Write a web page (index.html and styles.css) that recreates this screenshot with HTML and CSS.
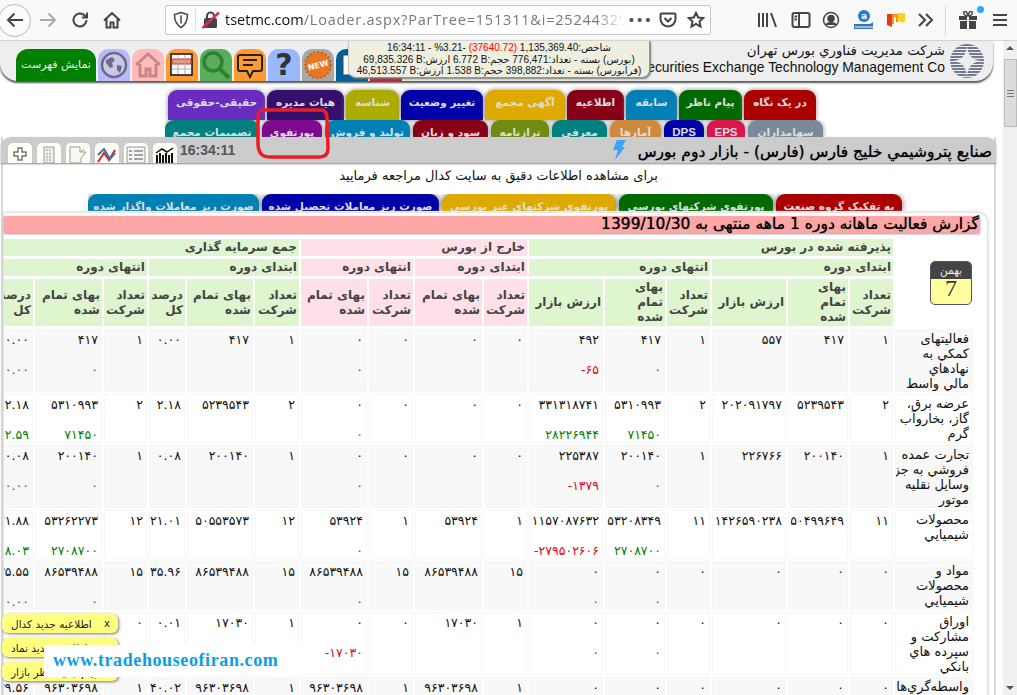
FILE: index.html
```html
<!DOCTYPE html>
<html lang="fa">
<head>
<meta charset="utf-8">
<title>tsetmc</title>
<link rel="stylesheet" href="styles.css">
</head>
<body>
<header class="toolbar">
  <div class="navbtns">
    <span class="backcircle"><svg width="20" height="20" viewBox="0 0 20 20" class="ic"><path d="M18 10H3M9.500 3.500 3 10l6.500 6.500"/></svg></span>
    <svg width="20" height="20" viewBox="0 0 20 20" class="ic faint"><path d="M2 10h15M10.500 3.500 17 10l-6.500 6.500"/></svg>
    <svg width="20" height="20" viewBox="0 0 20 20" class="ic"><path d="M16.500 10a6.500 6.500 0 1 1-2-4.700L17 7.500M17 2.500v5h-5" /></svg>
    <svg width="20" height="20" viewBox="0 0 20 20" class="ic"><path d="M2 10.500 10 3l8 7.500M4.500 9v8.500h4v-5h3v5h4V9"/></svg>
  </div>
  <div class="urlbar">
    <svg width="16" height="18" viewBox="0 0 16 18" class="ic thin"><path d="M8 1.500 14.500 3.500c0 6-1.500 10-6.500 13-5-3-6.500-7-6.500-13z"/><path d="M8 4.500v8" /></svg>
    <span class="urlsep"></span>
    <svg width="20" height="18" viewBox="0 0 20 18" class="lock"><rect x="3" y="7" width="13" height="10" rx="1.500" fill="#444"/><path d="M6 7V5a3.500 3.500 0 0 1 7 0v2" fill="none" stroke="#444" stroke-width="2"/><path d="M1.500 17 18 1.500" stroke="#e22850" stroke-width="2.500"/></svg>
    <span class="url"><b>tsetmc.com</b>/Loader.aspx?ParTree=151311&amp;i=25244329144808274</span>
    <span class="urlact">
      <span class="dots">•••</span>
      <svg width="18" height="18" viewBox="0 0 18 18" class="ic"><path d="M2.500 2.500h13a1 1 0 0 1 1 1V8a7.500 7.500 0 0 1-15 0V3.500a1 1 0 0 1 1-1zM5.500 7 9 10.500 12.500 7"/></svg>
      <svg width="18" height="18" viewBox="0 0 18 18" class="ic"><path d="m9 1.800 2.200 4.700 5 .6-3.700 3.400 1 5L9 13l-4.500 2.500 1-5L1.800 7.100l5-.6z"/></svg>
    </span>
  </div>
  <div class="tools">
    <svg width="22" height="18" viewBox="0 0 22 18" class="ic"><path d="M2 2v14M6 2v14M10 2v14M14 2l5 14"/></svg>
    <svg width="20" height="18" viewBox="0 0 20 18" class="ic"><rect x="1.500" y="2" width="17" height="14" rx="2"/><path d="M8 2v14M3.500 5.500H6M3.500 8.500H6"/></svg>
    <svg width="18" height="18" viewBox="0 0 18 18" class="ic thin"><circle cx="9" cy="9" r="7.500"/><circle cx="9" cy="7.500" r="3" fill="#444"/><path d="M4 14c1-3 9-3 10 0" fill="#444"/></svg>
    <svg width="24" height="22" viewBox="0 0 24 22"><circle cx="12" cy="7" r="6" fill="#1f7fd1"/><text x="12" y="10" class="atxt">a</text><path d="M4 15h14l3-2v7H2v-5z" fill="#3a78b5"/><path d="M3 18h18" stroke="#fff"/></svg>
    <svg width="18" height="18" viewBox="0 0 18 18"><path d="M0 3h5v13l-5-2z" fill="#e8381c"/><path d="M5 3h6v8H9V6H7v7H5z" fill="#f7941d"/><path d="M11 2h7v8l-3 2-2-2-2 1z" fill="#fbd21c"/></svg>
    <svg width="18" height="16" viewBox="0 0 18 16" class="ic"><path d="m2 2 6 6-6 6M9 2l6 6-6 6"/></svg>
  </div>
  <span class="toolsep"></span>
  <div class="tools2">
    <span class="gift"><svg width="20" height="18" viewBox="0 0 20 18"><path d="M1 5h8v4H1zM11 5h8v4h-8zM2 10h7v8H2zM11 10h7v8h-7z" fill="#444"/><path d="M10 5C7 5 5 3 6 1s4 1 4 4c0-3 3-6 4-4s-1 4-4 4" fill="none" stroke="#444" stroke-width="1.500"/></svg><i class="giftdot"></i></span>
    <svg width="16" height="14" viewBox="0 0 16 14" class="ic"><path d="M1 2h14M1 7h14M1 12h14"/></svg>
  </div>
</header>

<div class="viewport">
  <main class="page">
    <section class="logobar">
      <nav class="appnav">
        <a class="menubtn">نمایش فهرست</a>
        <a class="navic c-lilac"><svg width="28" height="28" viewBox="0 0 28 28"><circle cx="14" cy="14" r="12" fill="#c9c9e6" stroke="#6a6a8c" stroke-width="2.500"/><path d="M6 9l6-3 3 3-3 3 1 4-3 1-4-5zM17 14l5 1-2 7-3-3z" fill="#6a6a8c"/></svg></a>
        <a class="navic c-pink"><svg width="28" height="28" viewBox="0 0 28 28"><path d="M2 14 14 3l12 11" fill="none" stroke="#c98585" stroke-width="3"/><path d="M6 13v12h6v-7h4v7h6V13" fill="none" stroke="#c98585" stroke-width="3"/></svg></a>
        <a class="navic c-orange"><svg width="26" height="26" viewBox="0 0 26 26"><rect x="2" y="2" width="21" height="21" fill="#fff" stroke="#111" stroke-width="1.500"/><rect x="3" y="7" width="19" height="5" fill="#e89a7a" stroke="#c33"/><path d="M3 17h19M9 3v19M16 3v19" stroke="#aaa"/></svg></a>
        <a class="navic c-green"><svg width="30" height="30" viewBox="0 0 30 30"><circle cx="12" cy="12" r="9" fill="none" stroke="#2f7f35" stroke-width="3.500"/><path d="m18 18 10 10" stroke="#2f7f35" stroke-width="4"/></svg></a>
        <a class="navic c-orange"><svg width="28" height="28" viewBox="0 0 28 28"><path d="M4 4h20a2 2 0 0 1 2 2v12a2 2 0 0 1-2 2h-7l-3 6-3-6H4a2 2 0 0 1-2-2V6a2 2 0 0 1 2-2z" fill="none" stroke="#222" stroke-width="2"/><path d="M7 9h14M7 14h10" stroke="#222" stroke-width="2"/></svg></a>
        <a class="navic c-blue"><span class="qmark">?</span></a>
        <a class="navic c-gray"><svg width="30" height="30" viewBox="0 0 30 30"><circle cx="15" cy="15" r="13" fill="#e87722" stroke="#c95f12" stroke-dasharray="2 2" stroke-width="2"/><text x="15" y="18" class="newtxt" transform="rotate(-15 15 15)">NEW</text></svg></a>
        <a class="navic c-navy"><svg width="24" height="24" viewBox="0 0 24 24"><path d="M3 2h10v20H3z" fill="#fff" stroke="#444"/></svg></a>
        <a class="navic c-red"></a>
      </nav>
      <div class="brand">
        <div class="brandtext">
          <div class="brandfa">شرکت مديريت فناوري بورس تهران</div>
          <div class="branden">Securities Exchange Technology Management Co</div>
        </div>
        <svg class="emblem" width="34" height="36" viewBox="0 0 34 36">
          <defs><clipPath id="disc"><circle cx="17" cy="18" r="17"/></clipPath></defs>
          <g clip-path="url(#disc)" stroke="#747a92" stroke-width="1.800">
            <path d="M0 2h34M0 5h34M0 8h34M0 11h34M0 14h34M0 17h34M0 20h34M0 23h34M0 26h34M0 29h34M0 32h34M0 35h34"/>
          </g>
          <path d="M17 3c1 9 5 14 14 15-9 1-13 6-14 15-1-9-5-14-14-15 9-1 13-6 14-15z" fill="#eee"/>
        </svg>
      </div>
    </section>

    <div class="tabs tabs-a">
      <a class="tab t-violet">حقیقی-حقوقی</a>
      <a class="tab t-indigo">هیات مدیره</a>
      <a class="tab t-olive">شناسه</a>
      <a class="tab t-navy">تغییر وضعیت</a>
      <a class="tab t-amber">آگهی مجمع</a>
      <a class="tab t-maroon">اطلاعیه</a>
      <a class="tab t-sky">سابقه</a>
      <a class="tab t-green">پیام ناظر</a>
      <a class="tab t-red">در یک نگاه</a>
    </div>
    <div class="tabs tabs-b">
      <a class="tab t-teal">تصمیمات مجمع</a>
      <a class="tab t-purple">پورتفوی</a>
      <a class="tab t-sky">تولید و فروش</a>
      <a class="tab t-maroon">سود و زیان</a>
      <a class="tab t-moss">ترازنامه</a>
      <a class="tab t-teal">معرفی</a>
      <a class="tab t-tan">آمارها</a>
      <a class="tab t-navy latin">DPS</a>
      <a class="tab t-crimson latin">EPS</a>
      <a class="tab t-slate">سهامداران</a>
    </div>

    <section class="panel">
      <div class="panelhead">
        <div class="tinytools">
          <a class="tiny"><svg width="16" height="16" viewBox="0 0 16 16"><path d="M6 2h4v4h4v4h-4v4H6v-4H2V6h4z" fill="#fff" stroke="#777" stroke-width="1.500"/></svg></a>
          <a class="tiny"><svg width="12" height="18" viewBox="0 0 12 18"><rect x="1" y="1" width="10" height="16" fill="#eee" stroke="#999"/><path d="M3 4h6M3 8h6M3 11h6M3 14h6" stroke="#999" stroke-dasharray="2 1"/></svg></a>
          <a class="tiny"><svg width="20" height="18" viewBox="0 0 20 18"><path d="M2 1h10v5h6l-5 6v5H2zM13 6l3-3" fill="#f8f8f0" stroke="#999"/></svg></a>
          <a class="tiny"><svg width="20" height="18" viewBox="0 0 20 18"><path d="m1 16 6-9 5 7 6-10" fill="none" stroke="#d22" stroke-width="2"/><path d="m1 9 6-6 6 10 5-6" fill="none" stroke="#37a" stroke-width="2"/></svg></a>
          <a class="tiny"><svg width="20" height="18" viewBox="0 0 20 18"><rect x="1" y="1" width="18" height="16" fill="#f5f5f5" stroke="#999"/><path d="M3 5h3M8 5h9M3 9h3M8 9h9M3 13h3M8 13h9" stroke="#888" stroke-width="1.500"/></svg></a>
          <a class="tiny"><svg width="20" height="18" viewBox="0 0 20 18"><path d="M2 18V9M5 18V7M8 18V9M11 18V7M14 18V9M17 18V7" stroke="#111" stroke-width="2"/><path d="m1 7 6-4 5 3 6-4" fill="none" stroke="#111" stroke-width="1.500"/></svg></a>
        </div>
        <span class="clock">16:34:11</span>
        <div class="paneltitle">
          <svg class="bolt" width="14" height="20" viewBox="0 0 14 20"><path d="M5 0h9l-4 7h3L3 20l3-10H1z" fill="#3ba2fb"/></svg>
          <h1 class="symbol">صنایع پتروشیمي خلیج فارس (فارس) - بازار دوم بورس</h1>
        </div>
      </div>
      <p class="notice">برای مشاهده اطلاعات دقیق به سایت کدال مراجعه فرمایید</p>
      <div class="tabs tabs-c">
        <a class="tab t-sky">صورت ریز معاملات واگذار شده</a>
        <a class="tab t-navy">صورت ریز معاملات تحصیل شده</a>
        <a class="tab t-amber">پورتفوی شرکتهای غیر بورسی</a>
        <a class="tab t-green">پورتفوی شرکتهای بورسی</a>
        <a class="tab t-red">به تفکیک گروه صنعت</a>
      </div>
      <div class="card">
        <h2 class="reporttitle">گزارش فعالیت ماهانه دوره 1 ماهه منتهی به 1399/10/30</h2>
        <div class="tablewrap">
        <table class="report">
          <colgroup><col class="w78"><col class="w43"><col class="w60"><col class="w74"><col class="w43"><col class="w60"><col class="w74"><col class="w43"><col class="w67"><col class="w44"><col class="w66"><col class="w44"><col class="w66"><col class="w36"><col class="w43"><col class="w67"><col class="w43"></colgroup>
          <thead>
            <tr class="h1">
              <th rowspan="3" class="calcell"><div class="cal"><div class="calm">بهمن</div><div class="cald">7</div></div></th>
              <th colspan="6" class="gr">پذیرفته شده در بورس</th>
              <th colspan="4" class="pk">خارج از بورس</th>
              <th colspan="6" class="gr">جمع سرمایه گذاری</th>
            </tr>
            <tr class="h1">
              <th colspan="3" class="gr">ابتدای دوره</th>
              <th colspan="3" class="gr">انتهای دوره</th>
              <th colspan="2" class="pk">ابتدای دوره</th>
              <th colspan="2" class="pk">انتهای دوره</th>
              <th colspan="3" class="gr">ابتدای دوره</th>
              <th colspan="3" class="gr">انتهای دوره</th>
            </tr>
            <tr class="h3">
              <th class="gr">تعداد<br>شرکت</th><th class="gr">بهای<br>تمام<br>شده</th><th class="gr mid">ارزش بازار</th>
              <th class="gr">تعداد<br>شرکت</th><th class="gr">بهای<br>تمام<br>شده</th><th class="gr mid">ارزش بازار</th>
              <th class="pk">تعداد<br>شرکت</th><th class="pk">بهای تمام<br>شده</th>
              <th class="pk">تعداد<br>شرکت</th><th class="pk">بهای تمام<br>شده</th>
              <th class="gr">تعداد<br>شرکت</th><th class="gr">بهای تمام<br>شده</th><th class="gr">درصد<br>کل</th>
              <th class="gr">تعداد<br>شرکت</th><th class="gr">بهای تمام<br>شده</th><th class="gr">درصد<br>کل</th>
            </tr>
          </thead>
          <tbody>
            <tr class="alt">
              <td class="name">فعالیتهای<br>کمکي به<br>نهادهاي<br>مالي واسط</td>
              <td>۱</td><td>۴۱۷</td><td>۵۵۷</td><td>۱</td><td>۴۱۷<i class="up">۰</i></td><td>۴۹۲<i class="dn">&lrm;-۶۵</i></td>
              <td>۰</td><td>۰</td><td>۰</td><td>۰<i class="up">۰</i></td>
              <td>۱</td><td>۴۱۷</td><td>۰.۰۰</td><td>۱</td><td>۴۱۷<i class="up">۰</i></td><td>۰.۰۰<i class="up">۰.۰۰</i></td>
            </tr>
            <tr>
              <td class="name">عرضه برق،<br>گاز، بخاروآب<br>گرم</td>
              <td>۲</td><td>۵۲۳۹۵۴۳</td><td>۲۰۲۰۹۱۷۹۷</td><td>۲</td><td>۵۳۱۰۹۹۳<i class="up">۷۱۴۵۰</i></td><td>۳۳۱۳۱۸۷۴۱<i class="up">۲۸۲۲۶۹۴۴</i></td>
              <td>۰</td><td>۰</td><td>۰</td><td>۰<i class="up">۰</i></td>
              <td>۲</td><td>۵۲۳۹۵۴۳</td><td>۲.۱۸</td><td>۲</td><td>۵۳۱۰۹۹۳<i class="up">۷۱۴۵۰</i></td><td>۲.۱۸<i class="up">۲.۵۹</i></td>
            </tr>
            <tr class="alt">
              <td class="name">تجارت عمده<br>فروشي به جز<br>وسايل نقليه<br>موتور</td>
              <td>۱</td><td>۲۰۰۱۴۰</td><td>۲۲۶۷۶۶</td><td>۱</td><td>۲۰۰۱۴۰<i class="up">۰</i></td><td>۲۲۵۳۸۷<i class="dn">&lrm;-۱۳۷۹</i></td>
              <td>۰</td><td>۰</td><td>۰</td><td>۰<i class="up">۰</i></td>
              <td>۱</td><td>۲۰۰۱۴۰</td><td>۰.۰۸</td><td>۱</td><td>۲۰۰۱۴۰<i class="up">۰</i></td><td>۰.۰۸<i class="up">۰.۰۰</i></td>
            </tr>
            <tr>
              <td class="name">محصولات<br>شیمیایي</td>
              <td>۱۱</td><td>۵۰۴۹۹۶۴۹</td><td>۱۴۲۶۵۹۰۲۳۸</td><td>۱۱</td><td>۵۳۲۰۸۳۴۹<i class="up">۲۷۰۸۷۰۰</i></td><td>۱۱۵۷۰۸۷۶۳۲<i class="dn">&lrm;-۲۷۹۵۰۲۶۰۶</i></td>
              <td>۱</td><td>۵۳۹۲۴</td><td>۱</td><td>۵۳۹۲۴<i class="up">۰</i></td>
              <td>۱۲</td><td>۵۰۵۵۳۵۷۳</td><td>۲۱.۰۱</td><td>۱۲</td><td>۵۳۲۶۲۲۷۳<i class="up">۲۷۰۸۷۰۰</i></td><td>۲۱.۸۸<i class="up">۱۸.۰۳</i></td>
            </tr>
            <tr class="alt">
              <td class="name">مواد و<br>محصولات<br>شیمیایي</td>
              <td>۰</td><td>۰</td><td>۰</td><td>۰</td><td>۰<i class="up">۰</i></td><td>۰<i class="up">۰</i></td>
              <td>۱۵</td><td>۸۶۵۳۹۴۸۸</td><td>۱۵</td><td>۸۶۵۳۹۴۸۸<i class="up">۰</i></td>
              <td>۱۵</td><td>۸۶۵۳۹۴۸۸</td><td>۳۵.۹۶</td><td>۱۵</td><td>۸۶۵۳۹۴۸۸<i class="up">۰</i></td><td>۳۵.۵۵<i class="up">۰.۰۰</i></td>
            </tr>
            <tr>
              <td class="name">اوراق<br>مشارکت و<br>سپرده هاي<br>بانکي</td>
              <td>۰</td><td>۰</td><td>۰</td><td>۰</td><td>۰<i class="up">۰</i></td><td>۰<i class="up">۰</i></td>
              <td>۱</td><td>۱۷۰۳۰</td><td>۰</td><td>۰<i class="dn">&lrm;-۱۷۰۳۰</i></td>
              <td>۱</td><td>۱۷۰۳۰</td><td>۰.۰۱</td><td>۰</td><td>۰</td><td>۰.۰۰</td>
            </tr>
            <tr class="alt">
              <td class="name">واسطه‌گري‌هاي<br>مالي و<br>پولي</td>
              <td>۰</td><td>۰</td><td>۰</td><td>۰</td><td>۰</td><td>۰</td>
              <td>۱</td><td>۹۶۳۰۳۶۹۸</td><td>۱</td><td>۹۶۳۰۳۶۹۸</td>
              <td>۱</td><td>۹۶۳۰۳۶۹۸</td><td>۴۰.۰۲</td><td>۱</td><td>۹۶۳۰۳۶۹۸</td><td>۳۹.۵۶</td>
            </tr>
          </tbody>
        </table>
        </div>
      </div>
    </section>

    <aside class="ticker">
      <div class="tickline">شاخص:1,135,369.40 <span class="neg">(37640.72)</span> <bdi dir="ltr">%3.21-</bdi> - 16:34:11</div>
      <div class="tickline">(بورس) بسته - تعداد:776,471 حجم:<bdi dir="ltr">6.772 B</bdi> ارزش:<bdi dir="ltr">69,835.326 B</bdi></div>
      <div class="tickline">(فرابورس) بسته - تعداد:398,882 حجم:<bdi dir="ltr">1.538 B</bdi> ارزش:<bdi dir="ltr">46,513.557 B</bdi></div>
    </aside>

    <svg class="marker" width="76" height="54" viewBox="0 0 76 54"><path d="M8 3h58c4 0 6 3 6 8l1 30c0 6-3 9-8 9H16C8 50 4 48 3 38V10c0-4 2-7 5-7z" fill="none" stroke="#ed1c24" stroke-width="3.500"/></svg>

    <div class="toasts">
      <div class="toast"><span>اطلاعیه جدید کدال</span><b class="x">x</b></div>
      <div class="toast"><span>اطلاعیه جدید نماد</span><b class="x">x</b></div>
      <div class="toast"><span>پیام جدید ناظر بازار</span><b class="x">x</b></div>
    </div>
    <div class="watermark">www.tradehouseofiran.com</div>
  </main>

  <div class="scrollbar">
    <span class="arrow up-a"></span>
    <span class="thumb"><i class="grip"></i></span>
    <span class="arrow dn-a"></span>
  </div>
</div>
</body>
</html>
```

FILE: styles.css
```css
* { box-sizing: border-box; }
html, body { margin: 0; height: 100%; overflow: hidden; }
body { width: 1017px; height: 695px; background: #fff; font-family: "DejaVu Sans", sans-serif; display: flex; flex-direction: column; }

.toolbar { height: 41px; flex: none; background: #f9f9fa; border-bottom: 1px solid #d4d4d4; display: flex; align-items: center; position: relative; }
.ic { fill: none; stroke: #444; stroke-width: 2; }
.ic.faint { stroke: #aaa; }
.ic.thin { stroke-width: 1.500; }
.navbtns { display: flex; align-items: center; width: 165px; flex: none; padding-left: 4px; gap: 12px; }
.backcircle { width: 33px; height: 33px; margin-left: -6px; margin-right: -5px; border: 1px solid #b8b8b8; border-radius: 50%; background: #fcfcfc; display: flex; align-items: center; justify-content: center; flex: none; }
.urlbar { width: 546px; height: 30px; flex: none; background: #fff; border: 1px solid #c8c8c8; border-radius: 2px; display: flex; align-items: center; padding-left: 7px; }
.urlsep { width: 1px; height: 22px; background: #ddd; margin: 0 5px 0 6px; }
.lock { flex: none; margin-right: 4px; }
.url { font: 14.500px/28px "Open Sans", sans-serif; color: #777; letter-spacing: .8px; white-space: nowrap; overflow: hidden; width: 400px; -webkit-mask-image: linear-gradient(to left, transparent, #000 30px); mask-image: linear-gradient(to left, transparent, #000 30px); }
.url b { font-weight: 400; color: #111; letter-spacing: 0; }
.urlact { margin-left: auto; display: flex; align-items: center; gap: 10px; padding-right: 5px; }
.dots { font: 14px/1 "DejaVu Sans", sans-serif; color: #555; letter-spacing: 0; margin-right: -3px; }
.tools { display: flex; align-items: center; margin-left: 46px; width: 178px; justify-content: space-between; flex: none; }
.atxt { font: 700 9px "DejaVu Sans", sans-serif; fill: #fff; text-anchor: middle; }
.toolsep { width: 1px; height: 31px; background: #d8d8d8; margin-left: 10px; flex: none; }
.tools2 { display: flex; align-items: center; margin-left: 12px; gap: 14px; }
.gift { position: relative; display: flex; }
.giftdot { position: absolute; right: -6px; top: -5px; width: 7px; height: 7px; background: #2ea7ff; border-radius: 50%; }

.viewport { flex: 1; display: flex; min-height: 0; }
.page { width: 1003px; height: 654px; flex: none; overflow: hidden; position: relative; }
.scrollbar { width: 14px; flex: 1; background: #f0f0f0; position: relative; display: flex; flex-direction: column; align-items: center; justify-content: space-between; padding: 5px 0; }
.arrow { width: 0; height: 0; border-left: 4px solid transparent; border-right: 4px solid transparent; }
.up-a { border-bottom: 4px solid #555; }
.dn-a { border-top: 4px solid #555; }
.thumb { position: absolute; left: 1px; top: 18px; width: 13px; height: 68px; background: #dcdcdc; border: 1px solid #bbb; display: flex; align-items: center; justify-content: center; }
.grip { width: 7px; height: 7px; border-top: 1px solid #777; border-bottom: 1px solid #777; background: linear-gradient(#777, #777) center / 100% 1px no-repeat; }

.logobar { height: 40px; width: 993px; background: #eee; border-radius: 0 0 18px 18px; box-shadow: 0 2px 2px #555; display: flex; justify-content: space-between; padding-left: 16px; padding-right: 9px; }
.appnav { display: flex; align-items: flex-end; gap: 2px; }
.menubtn { width: 80px; height: 32px; background: #008000; color: #eee; font-size: 11px; line-height: 32px; text-align: center; border-radius: 12px 12px 0 0; direction: rtl; }
.navic { width: 32px; height: 32px; border-radius: 10px 10px 0 0; display: flex; align-items: center; justify-content: center; overflow: hidden; }
.c-lilac { background: #b9b9ff; }
.c-pink { background: #ffbcbc; }
.c-orange { background: #ff9a30; }
.c-green { background: #5aae5a; }
.c-blue { background: #98b8ff; }
.c-gray { background: #a8a8a8; }
.c-navy { background: #00609c; }
.c-red { background: #c02030; }
.qmark { font: 700 30px/32px "DejaVu Sans", sans-serif; color: #333; }
.newtxt { font: 700 8px "DejaVu Sans", sans-serif; fill: #fff; text-anchor: middle; }
.brand { display: flex; align-items: center; gap: 5px; }
.brandtext { text-align: right; color: #111; white-space: nowrap; align-self: flex-start; }
.brandfa { font-size: 13.300px; line-height: 18px; direction: rtl; padding-top: 1px; }
.branden { font: 13.900px/15px "Liberation Sans", sans-serif; }
.emblem { flex: none; }

.tabs { display: grid; }
.tab { display: block; border-radius: 9px 9px 0 0; color: #ddd; font-weight: 700; font-size: 10.500px; text-align: center; direction: rtl; white-space: nowrap; overflow: hidden; box-shadow: 0 0 5px #888; }
.tabs-a { margin-top: 9px; margin-left: 168px; height: 30px; grid-template-columns: 97px 77px 53px 82px 80px 57px 51px 63px 72px; column-gap: 2px; }
.tabs-a .tab { line-height: 24px; }
.tabs-b { margin-left: 165px; height: 17px; grid-template-columns: 94px 60px 85px 75px 58px 55px 51px 40px 38px 75px; column-gap: 3px; overflow: hidden; position: relative; }
.tabs-b .tab { line-height: 25px; font-size: 10.500px; }
.tabs-c .tab { line-height: 25px; box-shadow: 0 0 6px #666; font-size: 10.500px; }
.tabs-b .latin { font: 700 11.500px/25px "Liberation Sans", sans-serif; }
.t-violet { background: #6a2cc0; }
.t-indigo { background: #34106c; }
.t-olive { background: #acac00; }
.t-navy { background: #0000a8; }
.t-amber { background: #dfaa00; }
.t-maroon { background: #880018; }
.t-sky { background: #0080b4; }
.t-green { background: #006a00; }
.t-red { background: #aa0000; }
.t-teal { background: #008080; }
.t-purple { background: #7c0a8c; }
.t-moss { background: #708c10; }
.t-tan { background: #d08a40; }
.t-crimson { background: #dc1450; }
.t-slate { background: #7b8a9b; }

.panel { width: 995px; margin-left: 1px; position: relative; border-right: 2px solid #d8d8d8; border-left: 2px solid #d8d8d8; background: #fff; }
.panelhead { height: 26px; margin: 0 -2px; background: #ccc; border-radius: 10px 10px 0 0; display: flex; align-items: flex-end; padding-left: 7px; padding-right: 4px; box-shadow: 0 1px 2px #888; position: relative; }
.tinytools { display: flex; gap: 5px; }
.tiny { width: 24px; height: 20px; background: #fffff6; border-radius: 5px 5px 0 0; display: flex; align-items: flex-start; justify-content: center; padding-top: 3px; overflow: hidden; }
.clock { font: 700 14px/25px "Liberation Sans", sans-serif; color: #555; margin-left: 3px; align-self: center; }
.paneltitle { margin-left: auto; display: flex; align-items: flex-start; gap: 12px; align-self: flex-start; padding-top: 3px; }
.symbol { margin: 3px 0 0; font-size: 15.500px; line-height: 18px; font-weight: 400; color: #000; direction: rtl; white-space: nowrap; text-shadow: 0 0 1px #444; }
.bolt { flex: none; }
.notice { margin: 0; height: 31px; font-size: 13px; line-height: 25px; text-align: center; direction: rtl; color: #111; }
.tabs-c { height: 17px; margin-left: 85px; grid-template-columns: 171px 177px 174px 154px 126px; column-gap: 3px; overflow: hidden; }
.card { width: 985px; margin-top: 1px; background: #fff; border: 1px solid #e4e4e4; border-radius: 0 10px 0 0; padding-top: 3px; box-shadow: 0 0 3px #ccc; position: relative; }
.reporttitle { margin: 0; width: 976px; height: 17px; background: #ffa6a6; font-size: 15.500px; line-height: 17px; font-weight: 400; color: #000; direction: rtl; padding-right: 1px; text-shadow: 0 0 1px #444; box-shadow: 0 1px 2px #999; white-space: nowrap; }
.tablewrap { width: 971px; overflow: hidden; margin-top: 4px; display: flex; justify-content: flex-start; direction: rtl; }
.report { direction: rtl; table-layout: fixed; width: 987px; flex: none; border-collapse: separate; border-spacing: 2px; font-size: 12px; color: #111; }
.w78 { width: 78px; } .w43 { width: 43px; } .w60 { width: 60px; } .w74 { width: 74px; } .w67 { width: 67px; } .w44 { width: 44px; } .w66 { width: 66px; } .w36 { width: 36px; }
.report th { font-weight: 700; font-size: 12px; line-height: 15px; color: #444; text-align: right; padding: 0 2px; border-bottom: 1px solid #fff; white-space: nowrap; overflow: hidden; }
.h1 th { height: 18px; }
.h3 th { height: 48px; }
.report .gr { background: #dff5d0; }
.report .pk { background: #ffe0e8; }
.report .calcell { background: #fff; vertical-align: middle; padding: 0 1px 0 0; }
.cal { width: 42px; height: 44px; border-radius: 5px; overflow: hidden; border: 1px solid #555; background: #ffffa0; position: relative; }
.calm { height: 17px; background: #444; color: #eee; font-size: 10.500px; font-weight: 400; line-height: 17px; text-align: center; }
.cald { position: absolute; left: 0; right: 0; top: 12px; text-align: center; font: 400 24px/28px "Liberation Serif", serif; color: #333; }
.report td { vertical-align: top; text-align: right; padding: 2px 3px 0 2px; line-height: 15px; font-size: 12.500px; border: 1px solid #f6f6f6; white-space: nowrap; overflow: hidden; }
.report td.name { font-size: 13px; line-height: 15px; color: #111; padding-top: 1px; height: 49px; }
.alt td { background: #f8f8f8; }
.report i { display: block; font-style: normal; margin-top: 15px; }
.up { color: #008000; }
.dn { color: #f00020; }

.ticker { position: absolute; left: 348px; top: 0; width: 302px; height: 37px; background: #efefe0; border: 1px solid #c8c8c8; border-top: 0; border-right-color: #6f9bc0; border-bottom-color: #6f9bc0; border-radius: 0 0 8px 8px; box-shadow: 1px 1px 2px #777; font: 10px/12px "Liberation Sans", "DejaVu Sans", sans-serif; padding-top: 1px; text-align: center; color: #111; direction: rtl; white-space: nowrap; }
.tickline { height: 11.500px; }
.neg { color: #f00; }
.marker { position: absolute; left: 255px; top: 66px; }
.toasts { position: absolute; left: 2px; top: 573px; display: flex; flex-direction: column; gap: 5px; }
.toast { width: 116px; height: 19px; background: #ffff80; border-radius: 6px; box-shadow: 1px 1px 3px #777; display: flex; justify-content: space-between; align-items: center; padding: 0 8px 0 9px; font-size: 10.500px; direction: ltr; color: #222; }
.toast span { direction: rtl; }
.x { font-weight: 400; font-size: 10px; }
.watermark { position: absolute; left: 44px; top: 604px; width: 262px; height: 32px; background: #fff; padding-left: 9px; font: 700 18px/30px "Liberation Serif", serif; letter-spacing: .6px; color: #0a9ee8; white-space: nowrap; }
```
